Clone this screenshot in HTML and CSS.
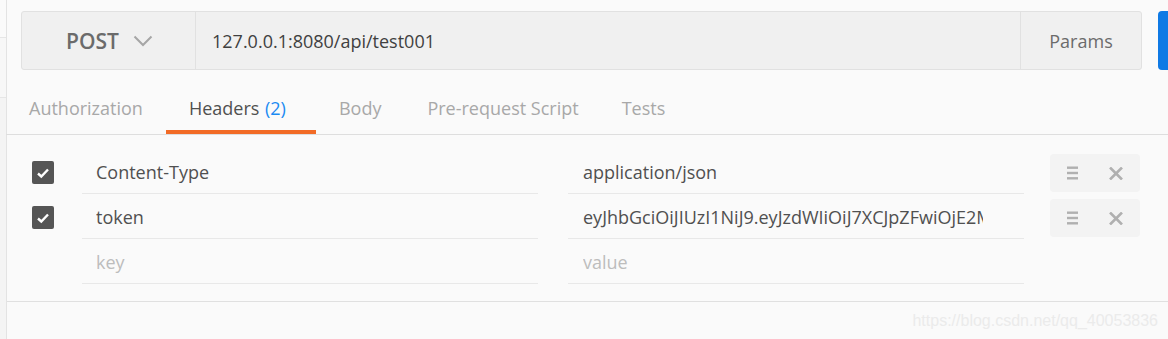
FILE: index.html
```html
<!DOCTYPE html>
<html>
<head>
<meta charset="utf-8">
<link rel="stylesheet" href="styles.css">
</head>
<body>
<div class="app">
  <div class="sidebar">
    <div class="sb-top"></div>
    <div class="sb-mid"></div>
    <div class="sb-rest"></div>
  </div>
  <div class="main">
    <div class="request">
      <div class="urlbar">
        <div class="method">
          <span class="method-name">POST</span>
          <svg class="chevron" width="20" height="12" viewBox="0 0 20 12"><path d="M1.5 1.5 L10 10 L18.5 1.5" fill="none" stroke="#a6a6a6" stroke-width="2"/></svg>
        </div>
        <div class="url">127.0.0.1:8080/api/test001</div>
        <div class="params">Params</div>
      </div>
      <div class="send"></div>
    </div>
    <div class="tabs">
      <div class="tab">Authorization</div>
      <div class="tab active">Headers <span class="count">(2)</span></div>
      <div class="tab">Body</div>
      <div class="tab">Pre-request Script</div>
      <div class="tab">Tests</div>
    </div>
    <div class="rows">
      <div class="row">
        <div class="check"><svg width="14" height="12" viewBox="0 0 14 12"><path d="M2 6.5 L5.3 9.5 L12 2.5" fill="none" stroke="#fff" stroke-width="2.4"/></svg></div>
        <div class="cell key"><span class="text">Content-Type</span></div>
        <div class="cell value"><span class="text">application/json</span></div>
        <div class="actions">
          <svg width="11" height="14" viewBox="0 0 11 14"><rect x="0" y="0.5" width="11" height="2.4" fill="#b0b0b0"/><rect x="0" y="5.8" width="11" height="2.4" fill="#b0b0b0"/><rect x="0" y="11.1" width="11" height="2.4" fill="#b0b0b0"/></svg>
          <svg width="14" height="13" viewBox="0 0 14 13"><path d="M1 0.5 L13 12.5 M13 0.5 L1 12.5" stroke="#b0b0b0" stroke-width="2.6"/></svg>
        </div>
      </div>
      <div class="row">
        <div class="check"><svg width="14" height="12" viewBox="0 0 14 12"><path d="M2 6.5 L5.3 9.5 L12 2.5" fill="none" stroke="#fff" stroke-width="2.4"/></svg></div>
        <div class="cell key"><span class="text">token</span></div>
        <div class="cell value"><span class="text">eyJhbGciOiJIUzI1NiJ9.eyJzdWIiOiJ7XCJpZFwiOjE2MzJ9</span></div>
        <div class="actions">
          <svg width="11" height="14" viewBox="0 0 11 14"><rect x="0" y="0.5" width="11" height="2.4" fill="#b0b0b0"/><rect x="0" y="5.8" width="11" height="2.4" fill="#b0b0b0"/><rect x="0" y="11.1" width="11" height="2.4" fill="#b0b0b0"/></svg>
          <svg width="14" height="13" viewBox="0 0 14 13"><path d="M1 0.5 L13 12.5 M13 0.5 L1 12.5" stroke="#b0b0b0" stroke-width="2.6"/></svg>
        </div>
      </div>
      <div class="row">
        <div class="check empty"></div>
        <div class="cell key placeholder"><span class="text">key</span></div>
        <div class="cell value placeholder"><span class="text">value</span></div>
        <div class="actions empty"></div>
      </div>
    </div>
    <div class="footer">https://blog.csdn.net/qq_40053836</div>
  </div>
</div>
</body>
</html>
```

FILE: styles.css
```css
* { box-sizing: border-box; }
html, body {
  margin: 0;
  padding: 0;
  width: 1168px;
  height: 339px;
  overflow: hidden;
  background: #fafafa;
  font-family: "Open Sans", "Noto Sans", sans-serif;
}
.app {
  display: flex;
  height: 339px;
}
.sidebar {
  width: 7px;
  flex: none;
  display: flex;
  flex-direction: column;
  border-right: 1px solid #e3e3e3;
  background: #f6f6f6;
}
.sb-top {
  height: 38px;
  background: #fafafa;
  border-bottom: 1px solid #e6e6e6;
}
.sb-mid {
  height: 60px;
  background: #f7f7f7;
  border-bottom: 1px solid #e6e6e6;
}
.sb-rest { flex: 1; background: #f4f4f4; }
.main {
  flex: 1;
  display: flex;
  flex-direction: column;
  min-width: 0;
}
.request {
  display: flex;
  gap: 16px;
  padding: 11px 0 0 14px;
}
.urlbar {
  width: 1121px;
  flex: none;
  height: 59px;
  display: flex;
  background: #f0f0f0;
  border: 1px solid #e1e1e1;
  border-radius: 3px;
}
.method {
  width: 174px;
  flex: none;
  display: flex;
  align-items: center;
  justify-content: flex-start;
  gap: 14px;
  border-right: 1px solid #e1e1e1;
  padding-left: 44px;
}
.method-name {
  font-size: 21px;
  font-weight: 600;
  color: #6b6b6b;
}
.chevron { margin-top: 1px; }
.url {
  flex: 1;
  display: flex;
  align-items: center;
  padding-left: 16px;
  font-size: 18px;
  color: #404040;
}
.params {
  width: 121px;
  flex: none;
  display: flex;
  align-items: center;
  justify-content: center;
  border-left: 1px solid #e1e1e1;
  font-size: 18px;
  color: #6b6b6b;
}
.send {
  flex: 1;
  height: 59px;
  background: #0f7ae5;
  border-radius: 4px 0 0 4px;
}
.tabs {
  display: flex;
  margin-top: 20px;
  height: 45px;
  border-bottom: 1px solid #dedede;
  margin-left: -1px;
}
.tab {
  padding: 2px 23px 0 23px;
  font-size: 18px;
  color: #a8a8a8;
  border-bottom: 4px solid transparent;
  line-height: 32px;
}
.tab.active {
  color: #505050;
  border-bottom-color: #f26b26;
  padding: 2px 30px 0 23px;
}
.tab:last-child { padding-left: 20px; }
.count { color: #1b8af2; margin-left: 1px; }
.rows {
  padding: 14px 0 17px 25px;
  border-bottom: 1px solid #e0e0e0;
  display: flex;
  flex-direction: column;
}
.row {
  display: flex;
  height: 45px;
  align-items: stretch;
}
.check {
  width: 22px;
  height: 23px;
  flex: none;
  margin-top: 12px;
  background: #555555;
  border-radius: 2px;
  display: flex;
  align-items: center;
  justify-content: center;
}
.check.empty { background: transparent; }
.cell {
  width: 456px;
  flex: none;
  border-bottom: 1px solid #e8e8e8;
  padding-left: 14px;
  font-size: 18px;
  color: #505050;
  display: flex;
  align-items: center;
  padding-top: 1px;
  white-space: nowrap;
}
.cell .text {
  display: block;
  overflow: hidden;
  white-space: nowrap;
  max-width: 400px;
}
.key { margin-left: 28px; }
.value { margin-left: 30px; padding-left: 15px; }
.placeholder { color: #bdbdbd; }
.actions {
  width: 90px;
  height: 38px;
  flex: none;
  margin: 5px 0 0 26px;
  background: #f3f3f3;
  border-radius: 4px;
  display: flex;
  align-items: center;
  justify-content: flex-start;
  gap: 31px;
  padding-left: 17px;
}
.actions.empty { background: transparent; }
.footer {
  text-align: right;
  padding: 10px 10px 0 0;
  font-family: "Liberation Sans", Arial, sans-serif;
  font-size: 16px;
  color: #ebebeb;
}
```
